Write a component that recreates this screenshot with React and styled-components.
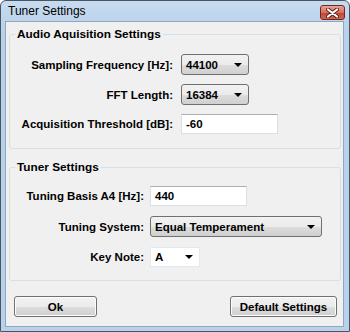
import React from 'react';
import styled, { createGlobalStyle } from 'styled-components';

const GlobalStyle = createGlobalStyle`
  html, body {
    margin: 0;
    padding: 0;
    background: #ffffff;
  }
`;

const Frame = styled.div`
  width: 350px;
  height: 332px;
  box-sizing: border-box;
  border: 1px solid #4a5560;
  border-radius: 6px 6px 0 0;
  background: linear-gradient(#c7dbf0, #b9d1ea 30px, #b9d1ea);
  display: flex;
  flex-direction: column;
  padding: 0 5px 4px 4px;
  overflow: hidden;
`;

const TitleBar = styled.div`
  height: 20px;
  display: flex;
  align-items: center;
  justify-content: space-between;
  padding-left: 3px;
`;

const Title = styled.span`
  font-family: 'Liberation Sans', Arial, sans-serif;
  font-size: 12px;
  color: #000;
`;

const CloseButton = styled.div`
  width: 25px;
  height: 15px;
  box-sizing: border-box;
  margin-top: 3px;
  margin-right: -1px;
  border: 1px solid #6a2a22;
  border-radius: 3px;
  background: linear-gradient(#e9a497, #d76f5d 50%, #c4422d 51%, #d2644d);
  display: flex;
  align-items: center;
  justify-content: center;
`;

const Content = styled.div`
  flex: 1;
  border: 1px solid #8fa8c2;
  background: #f0f0f0;
  display: flex;
  flex-direction: column;
  padding: 6px 2px 9px 3px;
  font-family: 'Liberation Sans', Arial, sans-serif;
  font-size: 11.5px;
  font-weight: bold;
  color: #000;
`;

const Group = styled.fieldset`
  margin: 0 0 ${(p) => p.$gap || 0}px 0;
  border: 1px solid #d5dfe5;
  border-radius: 3px;
  padding: 0 0 ${(p) => p.$bottom}px 0;
  min-width: 0;
`;

const Legend = styled.legend`
  padding: 0 2px;
  margin-left: 5px;
  line-height: 13px;
  font-size: 11.8px;
`;

const Rows = styled.div`
  display: grid;
  grid-template-columns: ${(p) => p.$labelWidth}px auto;
  column-gap: ${(p) => p.$colGap}px;
  row-gap: ${(p) => p.$rowGap}px;
  align-items: center;
  padding-top: ${(p) => p.$top}px;
`;

const Label = styled.span`
  justify-self: end;
  white-space: nowrap;
`;

const TextBox = styled.div`
  width: ${(p) => p.$width}px;
  height: 20px;
  box-sizing: border-box;
  background: #fff;
  border: 1px solid #dbdfe6;
  border-top-color: #abadb3;
  display: flex;
  align-items: center;
  padding-left: 4px;
`;

const Combo = styled.div`
  width: ${(p) => p.$width}px;
  height: ${(p) => (p.$flat ? 20 : 21)}px;
  box-sizing: border-box;
  border: 1px solid ${(p) => (p.$flat ? '#e3e9ef' : '#707070')};
  border-radius: ${(p) => (p.$flat ? 0 : 3)}px;
  background: ${(p) =>
    p.$flat ? '#fff' : 'linear-gradient(#f2f2f2, #ebebeb 50%, #dddddd 51%, #cfcfcf)'};
  display: flex;
  align-items: center;
  justify-content: space-between;
  padding: 0 6px 0 4px;
`;

const Arrow = styled.span`
  width: 0;
  height: 0;
  border-left: 4px solid transparent;
  border-right: 4px solid transparent;
  border-top: 4px solid #000;
`;

const ButtonRow = styled.div`
  margin-top: auto;
  display: flex;
  justify-content: space-between;
  padding: 0 4px 0 5px;
`;

const Button = styled.button`
  width: ${(p) => p.$width}px;
  height: 21px;
  box-sizing: border-box;
  border: 1px solid #707070;
  border-radius: 3px;
  background: linear-gradient(#f2f2f2, #ebebeb 50%, #dddddd 51%, #cfcfcf);
  box-shadow: inset 0 0 0 1px #fcfcfc;
  font-family: 'Liberation Sans', Arial, sans-serif;
  font-size: 11.5px;
  font-weight: bold;
  color: #000;
  padding: 0;
`;

const ComboBox = ({ value, width, flat }) => (
  <Combo $width={width} $flat={flat}>
    <span>{value}</span>
    <Arrow />
  </Combo>
);

export default function App() {
  return (
    <>
      <GlobalStyle />
      <Frame>
        <TitleBar>
          <Title>Tuner Settings</Title>
          <CloseButton>
            <svg width="13" height="10" viewBox="0 0 13 10">
              <path d="M2 1.5 L11 8.5 M11 1.5 L2 8.5" stroke="#5a2018" strokeWidth="4" strokeLinecap="round" />
              <path d="M2 1.5 L11 8.5 M11 1.5 L2 8.5" stroke="#fff" strokeWidth="2.2" strokeLinecap="round" />
            </svg>
          </CloseButton>
        </TitleBar>
        <Content>
          <Group $bottom={14} $gap={12}>
            <Legend>Audio Aquisition Settings</Legend>
            <Rows $labelWidth={163} $colGap={8} $rowGap={9} $top={13}>
              <Label>Sampling Frequency [Hz]:</Label>
              <ComboBox value="44100" width={68} />
              <Label>FFT Length:</Label>
              <ComboBox value="16384" width={68} />
              <Label>Acquisition Threshold [dB]:</Label>
              <TextBox $width={97}>-60</TextBox>
            </Rows>
          </Group>
          <Group $bottom={13}>
            <Legend>Tuner Settings</Legend>
            <Rows $labelWidth={134} $colGap={6} $rowGap={10} $top={12}>
              <Label>Tuning Basis A4 [Hz]:</Label>
              <TextBox $width={97}>440</TextBox>
              <Label>Tuning System:</Label>
              <ComboBox value="Equal Temperament" width={172} />
              <Label>Key Note:</Label>
              <ComboBox value="A" width={50} flat />
            </Rows>
          </Group>
          <ButtonRow>
            <Button $width={83}>Ok</Button>
            <Button $width={107}>Default Settings</Button>
          </ButtonRow>
        </Content>
      </Frame>
    </>
  );
}
